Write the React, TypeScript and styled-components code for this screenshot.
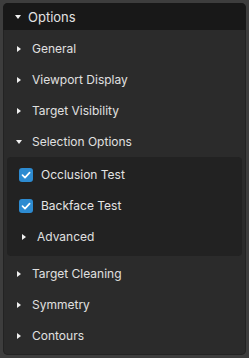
import styled, { createGlobalStyle } from "styled-components";

const GlobalStyle = createGlobalStyle`
  html, body {
    margin: 0;
    padding: 0;
    background: #3d3d3d;
  }
  body {
    font-family: Inter, "Noto Sans", sans-serif;
    font-size: 12px;
    color: #e4e4e4;
  }
`;

type Item = { label: string; open?: boolean };

const Arrow = ({ open }: { open?: boolean }) => (
  <ArrowSvg viewBox="0 0 6 6" width={6} height={6}>
    {open ? <path d="M0 1 L6 1 L3 5 Z" fill="#f0f0f0" /> : <path d="M1 0 L5 3 L1 6 Z" fill="#f0f0f0" />}
  </ArrowSvg>
);

const Check = () => (
  <CheckBox>
    <svg viewBox="0 0 14 14" width={14} height={14}>
      <path d="M3.5 7.2 L6 9.6 L10.6 4.6" fill="none" stroke="#fff" strokeWidth={1.7} strokeLinecap="round" strokeLinejoin="round" />
    </svg>
  </CheckBox>
);

const before: Item[] = [{ label: "General" }, { label: "Viewport Display" }, { label: "Target Visibility" }];
const after: Item[] = [{ label: "Target Cleaning" }, { label: "Symmetry" }, { label: "Contours" }];

const App = () => {
  return (
    <>
      <GlobalStyle />
      <Page>
        <Panel>
          <Header>
            <Arrow open />
            <HeaderLabel>Options</HeaderLabel>
          </Header>
          <Body>
            {before.map((it) => (
              <SubHeader key={it.label}>
                <Arrow />
                <span>{it.label}</span>
              </SubHeader>
            ))}
            <SubHeader>
              <Arrow open />
              <span>Selection Options</span>
            </SubHeader>
            <SubPanel>
              <CheckRow>
                <Check />
                <span>Occlusion Test</span>
              </CheckRow>
              <CheckRow>
                <Check />
                <span>Backface Test</span>
              </CheckRow>
              <NestedHeader>
                <Arrow />
                <span>Advanced</span>
              </NestedHeader>
            </SubPanel>
            <Spacer />
            {after.map((it) => (
              <SubHeader key={it.label}>
                <Arrow />
                <span>{it.label}</span>
              </SubHeader>
            ))}
          </Body>
        </Panel>
      </Page>
    </>
  );
};

const Page = styled.div`
  padding: 3px;
  height: 358px;
  box-sizing: border-box;
`;

const Panel = styled.div`
  border-radius: 5px;
  overflow: hidden;
  background: #2b2b2b;
  box-shadow: inset 0 0 0 1px #232323, inset -1px 0 0 #333333;
  height: 100%;
  display: flex;
  flex-direction: column;
`;

const Header = styled.div`
  height: 27px;
  flex: none;
  background: #181818;
  display: flex;
  align-items: center;
  padding-left: 12px;
  gap: 7px;
`;

const HeaderLabel = styled.span`
  font-size: 13px;
  color: #e2e2e2;
`;

const ArrowSvg = styled.svg`
  flex: none;
`;

const Body = styled.div`
  padding: 3px 4px 0 4px;
  display: flex;
  flex-direction: column;
`;

const SubHeader = styled.div`
  height: 31px;
  display: flex;
  align-items: center;
  padding-left: 9px;
  gap: 10px;
  color: #e0e0e0;
`;

const SubPanel = styled.div`
  background: #222222;
  border-radius: 4px;
  padding: 2px 0 4px 0;
  display: flex;
  flex-direction: column;
`;

const CheckRow = styled.div`
  height: 31px;
  display: flex;
  align-items: center;
  padding-left: 12px;
  gap: 8px;
`;

const CheckBox = styled.div`
  width: 14px;
  height: 14px;
  border-radius: 3px;
  background: #2d8bd1;
  display: flex;
`;

const NestedHeader = styled(SubHeader)`
  padding-left: 14px;
  gap: 10px;
`;

const Spacer = styled.div`
  height: 2px;
`;

export default App;
